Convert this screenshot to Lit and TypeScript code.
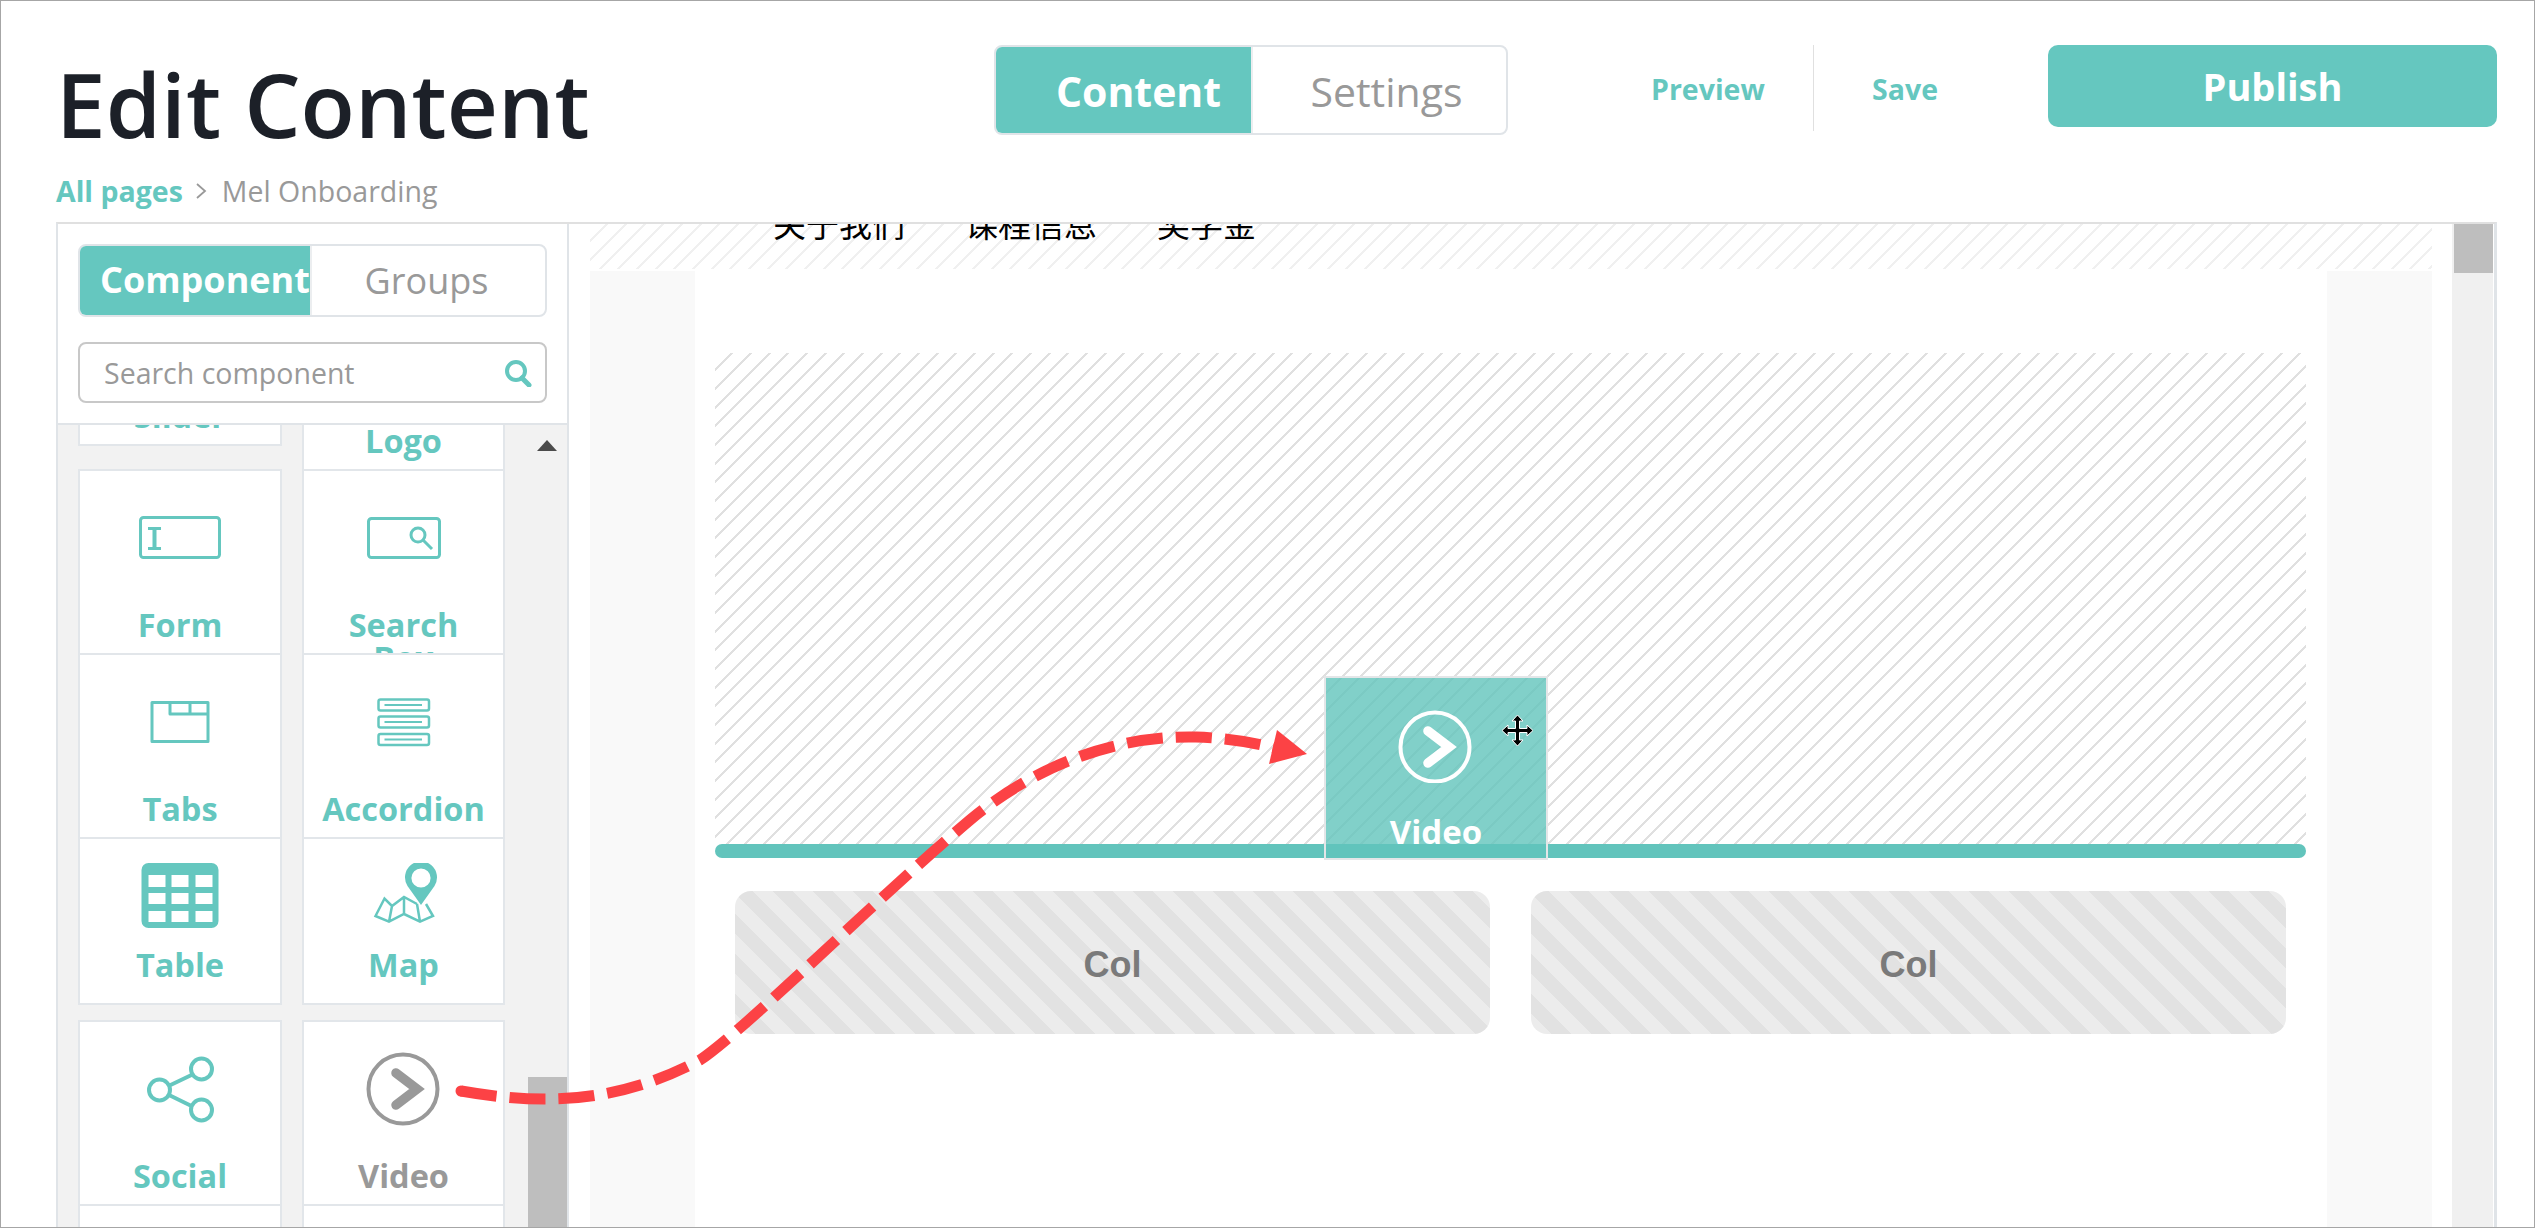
import { LitElement, css, html, svg } from "lit";
import { customElement } from "lit/decorators.js";

const chevronCircle = svg`
  <circle cx="49" cy="44" r="34.5" fill="none" stroke="currentColor" stroke-width="4" />
  <path d="M42 28 L63 44 L42 60" fill="none" stroke="currentColor" stroke-width="9.5" stroke-linecap="round" stroke-linejoin="miter" />
`;

const icons = {
  none: svg``,
  form: svg`
    <rect x="10.5" y="22.5" width="79" height="40" rx="3" fill="none" stroke="currentColor" stroke-width="3" />
    <path d="M18 33.5 H31 M18 53.5 H31" fill="none" stroke="currentColor" stroke-width="3" />
    <path d="M24.5 33 V54" fill="none" stroke="currentColor" stroke-width="4" />
  `,
  search: svg`
    <rect x="14.5" y="23.5" width="71" height="39" rx="3" fill="none" stroke="currentColor" stroke-width="3" />
    <circle cx="64" cy="40" r="7" fill="none" stroke="currentColor" stroke-width="3" />
    <path d="M69 45 L78 54" fill="none" stroke="currentColor" stroke-width="3" />
  `,
  tabs: svg`
    <path d="M22 23.5 H78 V62.5 H22 Z M40 23.5 V35 H78 M60 23.5 V35" fill="none" stroke="currentColor" stroke-width="3" stroke-linejoin="round" />
  `,
  accordion: svg`
    <g fill="none" stroke="currentColor" stroke-width="2.5">
      <rect x="24.5" y="20.5" width="50.5" height="11" rx="2" />
      <rect x="24.5" y="37.5" width="50.5" height="11" rx="2" />
      <rect x="24.5" y="55" width="50.5" height="11" rx="2" />
      <path d="M30.5 26 H68 M30.5 43 H68 M30.5 60.5 H68" stroke-width="2" />
    </g>
  `,
  table: svg`
    <path fill="currentColor" fill-rule="evenodd" d="M18.5 0 H81.5 a7 7 0 0 1 7 7 V58 a7 7 0 0 1 -7 7 H18.5 a7 7 0 0 1 -7 -7 V7 a7 7 0 0 1 7 -7 Z
      M18.5 12 V24 H35.5 V12 Z M41.5 12 V24 H58.5 V12 Z M65.5 12 V24 H82.5 V12 Z
      M18.5 30 V41 H35.5 V30 Z M41.5 30 V41 H58.5 V30 Z M65.5 30 V41 H82.5 V30 Z
      M18.5 48 V59 H35.5 V48 Z M41.5 48 V59 H58.5 V48 Z M65.5 48 V59 H82.5 V48 Z" />
  `,
  map: svg`
    <path fill="currentColor" fill-rule="evenodd" d="M67 42 L53.5 23 A16 16 0 1 1 80.5 23 Z M57.4 15 a9.6 9.6 0 1 0 19.2 0 a9.6 9.6 0 1 0 -19.2 0 Z" />
    <path d="M63 41 L50 34 L38 43 L30.5 35.5 L21.5 53 L35 58.7 L50 51 L66 58.7 L79 53 L72 41 M38 43 L35 58.7 M50 34 V51 M63 41 L66 58.7" fill="none" stroke="currentColor" stroke-width="2.5" />
  `,
  social: svg`
    <g fill="none" stroke="currentColor" stroke-width="4">
      <circle cx="29.5" cy="44" r="10.5" />
      <circle cx="71.5" cy="23" r="10.5" />
      <circle cx="71.5" cy="64" r="10.5" />
      <path d="M39.5 39.5 L61.5 29 M39 49 L61.5 60" />
    </g>
  `,
  video: svg`
    <g transform="translate(0 -1)">${chevronCircle}</g>
  `,
};

type IconName = keyof typeof icons;

interface Tile {
  label: string;
  icon: IconName;
  cls?: string;
}

const leftTiles: Tile[] = [
  { label: "Slider", icon: "none", cls: "end" },
  { label: "Form", icon: "form" },
  { label: "Tabs", icon: "tabs" },
  { label: "Table", icon: "table", cls: "low end" },
  { label: "Social", icon: "social" },
  { label: "", icon: "none" },
];

const rightTiles: Tile[] = [
  { label: "Logo", icon: "none" },
  { label: "Search Box", icon: "search" },
  { label: "Accordion", icon: "accordion" },
  { label: "Map", icon: "map", cls: "low end" },
  { label: "Video", icon: "video", cls: "picked" },
  { label: "", icon: "none" },
];

@customElement("app-root")
export class AppRoot extends LitElement {
  static styles = css`
    :host {
      display: block;
      font-family: "Open Sans", "Noto Sans", sans-serif;
    }

    .frame {
      position: relative;
      box-sizing: border-box;
      width: 2535px;
      height: 1228px;
      border: 1px solid #a6a6a6;
      background: #fff;
      display: flex;
      flex-direction: column;
      overflow: hidden;
    }

    .header {
      box-sizing: border-box;
      height: 221px;
      flex: none;
      padding: 44px 37px 0 55px;
    }

    .top-row {
      display: flex;
      height: 90px;
    }

    h1 {
      margin: 0;
      width: 938px;
      flex: none;
      font-size: 89px;
      font-weight: 600;
      line-height: 118px;
      color: #1c2028;
    }

    .segment {
      box-sizing: border-box;
      width: 514px;
      height: 90px;
      flex: none;
      display: flex;
      border: 2px solid #e0e4e8;
      border-radius: 8px;
      overflow: hidden;
      font-size: 41px;
    }

    .segment div {
      display: flex;
      align-items: center;
      justify-content: center;
      color: #999;
      padding-top: 2px;
      box-sizing: border-box;
    }

    .segment .on {
      width: 255px;
      background: #65c7bf;
      color: #fff;
      font-weight: 700;
      padding-left: 30px;
    }

    .segment .off {
      flex: 1;
      padding-left: 14px;
      border-left: 2px solid #eceef0;
    }

    .link {
      font-size: 28.5px;
      font-weight: 700;
      color: #65c7bf;
      line-height: 89px;
    }

    .link.preview {
      margin-left: 143px;
    }

    .divider {
      width: 2px;
      height: 86px;
      margin: 0 58px 0 48px;
      background: #e0e0e0;
    }

    .publish {
      box-sizing: border-box;
      width: 449px;
      height: 82px;
      margin-left: 110px;
      flex: none;
      border-radius: 10px;
      background: #65c7bf;
      color: #fff;
      font-size: 38px;
      font-weight: 700;
      text-align: center;
      line-height: 82px;
    }

    .crumb {
      display: flex;
      align-items: center;
      height: 38px;
      margin-top: 37px;
      font-size: 28.5px;
      color: #999;
    }

    .crumb b {
      color: #65c7bf;
      font-weight: 700;
    }

    .crumb svg {
      width: 12px;
      height: 18px;
      margin: 0 15px 0 12px;
    }

    .panel {
      flex: 1;
      min-height: 0;
      display: flex;
      margin: 0 37px 0 55px;
      border-top: 2px solid #e0e0e0;
      border-left: 2px solid #e0e4e8;
      border-right: 3px solid #e0e4e8;
    }

    .sidebar {
      box-sizing: border-box;
      width: 511px;
      flex: none;
      display: flex;
      flex-direction: column;
      border-right: 2px solid #e0e4e8;
    }

    .side-top {
      box-sizing: border-box;
      height: 201px;
      flex: none;
      padding: 20px 20px 0;
      border-bottom: 2px solid #e0e4e8;
    }

    .side-tabs {
      box-sizing: border-box;
      width: 469px;
      height: 73px;
      display: flex;
      border: 2px solid #e0e4e8;
      border-radius: 8px;
      overflow: hidden;
      font-size: 36px;
    }

    .side-tabs .on {
      width: 230px;
      flex: none;
      overflow: hidden;
      white-space: nowrap;
      background: #65c7bf;
      color: #fff;
      font-weight: 700;
      line-height: 68px;
      padding-left: 20px;
      box-sizing: border-box;
    }

    .side-tabs .off {
      flex: 1;
      text-align: center;
      color: #999;
      line-height: 69px;
      padding-right: 4px;
      border-left: 2px solid #eceef0;
    }

    .search {
      box-sizing: border-box;
      width: 469px;
      height: 61px;
      margin-top: 25px;
      display: flex;
      align-items: center;
      justify-content: space-between;
      padding: 0 13px 0 24px;
      border: 2px solid #c8c8c8;
      border-radius: 8px;
      font-size: 28.5px;
      color: #999;
    }

    .search svg {
      width: 28px;
      height: 28px;
    }

    .list {
      flex: 1;
      min-height: 0;
      display: flex;
      background: #f2f2f2;
      overflow: hidden;
    }

    .col {
      flex: none;
      display: flex;
      flex-direction: column;
    }

    .col.a {
      width: 204px;
      margin: -165px 20px 0 20px;
    }

    .col.b {
      width: 203px;
      margin: -140px 0 0 0;
    }

    .tile {
      box-sizing: border-box;
      height: 186px;
      flex: none;
      margin-bottom: -2px;
      display: flex;
      flex-direction: column;
      align-items: center;
      padding: 24px 12px 0;
      background: #fff;
      border: 2px solid #e2e6ea;
      color: #65c7bf;
      overflow: hidden;
      font-size: 32.5px;
      font-weight: 700;
      line-height: 33px;
      text-align: center;
    }

    .tile svg {
      width: 100px;
      height: 80px;
      flex: none;
    }

    .tile span {
      margin-top: 33px;
    }

    .tile.low {
      height: 168px;
    }

    .tile.low span {
      margin-top: 5px;
    }

    .tile.end {
      margin-bottom: 15px;
    }

    .col.a .tile:first-child {
      margin-bottom: 23px;
    }

    .tile.picked {
      color: #999;
    }

    .bar {
      position: relative;
      width: 40px;
      margin-left: 23px;
      flex: none;
      display: flex;
      flex-direction: column;
      justify-content: space-between;
    }

    .bar .up {
      width: 0;
      height: 0;
      margin: 15px 0 0 9px;
      border: 10px solid transparent;
      border-top: 0;
      border-bottom: 11px solid #4b4b4b;
    }

    .bar .thumb {
      height: 150px;
      background: #bebebe;
    }

    .canvas {
      flex: 1;
      min-width: 0;
      display: flex;
      padding-left: 21px;
    }

    .site {
      width: 1842px;
      flex: none;
      display: flex;
      flex-direction: column;
    }

    .band {
      box-sizing: border-box;
      height: 45px;
      flex: none;
      display: flex;
      gap: 60px;
      padding-left: 183px;
      overflow: hidden;
      color: #000;
      font-family: "Noto Sans CJK SC", "Open Sans", sans-serif;
      font-size: 33px;
      line-height: 33px;
      background: repeating-linear-gradient(135deg, #fff 0 11.2px, #f0f0f0 11.2px 13.2px);
    }

    .band span {
      margin-top: -17px;
    }

    .page {
      flex: 1;
      margin-top: 2px;
      display: flex;
      background: #f9f9f9;
    }

    .content {
      box-sizing: border-box;
      width: 1632px;
      margin-left: 105px;
      padding: 82px 21px 0 20px;
      background: #fff;
    }

    .zone {
      height: 491px;
      background: repeating-linear-gradient(135deg, #fff 0 11.2px, #e0e0e0 11.2px 13.2px);
    }

    .drop {
      height: 14px;
      border-radius: 7px;
      background: #62c4bc;
    }

    .cols {
      display: flex;
      gap: 41px;
      margin: 33px 20px 0 20px;
    }

    .col-box {
      box-sizing: border-box;
      flex: 1;
      height: 143px;
      padding-top: 4px;
      display: flex;
      align-items: center;
      justify-content: center;
      border-radius: 16px;
      background: repeating-linear-gradient(45deg, #ececec 0 14.15px, #e2e2e2 14.15px 28.3px);
      color: #7a7a7a;
      font-family: "Liberation Sans", Arial, sans-serif;
      font-size: 36px;
      font-weight: 700;
    }

    .scroll {
      width: 41px;
      margin-left: 20px;
      flex: none;
      background: #f0f0f0;
    }

    .scroll div {
      height: 49px;
      margin-left: 2px;
      background: #bebebe;
    }

    .ghost {
      position: absolute;
      left: 1323px;
      top: 675px;
      box-sizing: border-box;
      width: 224px;
      height: 184px;
      display: flex;
      flex-direction: column;
      align-items: center;
      padding-top: 25px;
      border: 2px solid #e4e6e8;
      background: rgba(98, 196, 188, 0.8);
      color: #fff;
      font-size: 33px;
      font-weight: 700;
      line-height: 33px;
      overflow: hidden;
    }

    .ghost svg {
      width: 100px;
      height: 80px;
      flex: none;
    }

    .ghost span {
      margin-top: 32px;
    }

    .cursor {
      position: absolute;
      left: 1500px;
      top: 713px;
      width: 33px;
      height: 33px;
    }

    .arrow {
      position: absolute;
      left: -1px;
      top: -1px;
      width: 2535px;
      height: 1228px;
      pointer-events: none;
    }
  `;

  renderTile(t: Tile) {
    return html`
      <div class="tile ${t.cls ?? ""}">
        <svg viewBox="0 0 100 80">${icons[t.icon]}</svg>
        <span>${t.label}</span>
      </div>
    `;
  }

  render() {
    return html`
      <div class="frame">
        <div class="header">
          <div class="top-row">
            <h1>Edit Content</h1>
            <div class="segment">
              <div class="on">Content</div>
              <div class="off">Settings</div>
            </div>
            <div class="link preview">Preview</div>
            <div class="divider"></div>
            <div class="link">Save</div>
            <div class="publish">Publish</div>
          </div>
          <div class="crumb">
            <b>All pages</b>
            <svg viewBox="0 0 12 18"><path d="M2 2 L10 9 L2 16" fill="none" stroke="#999" stroke-width="1.8" /></svg>
            <span>Mel Onboarding</span>
          </div>
        </div>

        <div class="panel">
          <div class="sidebar">
            <div class="side-top">
              <div class="side-tabs">
                <div class="on">Components</div>
                <div class="off">Groups</div>
              </div>
              <div class="search">
                <span>Search component</span>
                <svg viewBox="0 0 28 28">
                  <circle cx="12" cy="12" r="9" fill="none" stroke="#65c7bf" stroke-width="4" />
                  <path d="M18 19 L25 26" fill="none" stroke="#65c7bf" stroke-width="5" stroke-linecap="round" />
                </svg>
              </div>
            </div>
            <div class="list">
              <div class="col a">${leftTiles.map((t) => this.renderTile(t))}</div>
              <div class="col b">${rightTiles.map((t) => this.renderTile(t))}</div>
              <div class="bar">
                <div class="up"></div>
                <div class="thumb"></div>
              </div>
            </div>
          </div>

          <div class="canvas">
            <div class="site">
              <div class="band">
                <span>关于我们</span>
                <span>课程信息</span>
                <span>奖学金</span>
              </div>
              <div class="page">
                <div class="content">
                  <div class="zone"></div>
                  <div class="drop"></div>
                  <div class="cols">
                    <div class="col-box">Col</div>
                    <div class="col-box">Col</div>
                  </div>
                </div>
              </div>
            </div>
            <div class="scroll"><div></div></div>
          </div>
        </div>

        <div class="ghost">
          <svg viewBox="0 0 100 80">${chevronCircle}</svg>
          <span>Video</span>
        </div>

        <svg class="cursor" viewBox="0 0 33 33">
          <path
            d="M16.5 1 L22 7 H18.5 V14.5 H26 V11 L32 16.5 L26 22 V18.5 H18.5 V26 H22 L16.5 32 L11 26 H14.5 V18.5 H7 V22 L1 16.5 L7 11 V14.5 H14.5 V7 H11 Z"
            fill="#000"
            stroke="#fff"
            stroke-width="1"
          />
        </svg>

        <svg class="arrow" viewBox="0 0 2535 1228">
          <path
            d="M461 1091 C530 1103 610 1108 700 1060 C745 1030 880 895 970 820 C1030 770 1110 735 1196 737 C1225 738 1250 742 1276 748"
            fill="none"
            stroke="#fc4245"
            stroke-width="11"
            stroke-dasharray="36 13"
          />
          <circle cx="461" cy="1091" r="5.5" fill="#fc4245" />
          <path d="M1307 754 L1277 730 L1269 764 Z" fill="#fc4245" />
        </svg>
      </div>
    `;
  }
}
